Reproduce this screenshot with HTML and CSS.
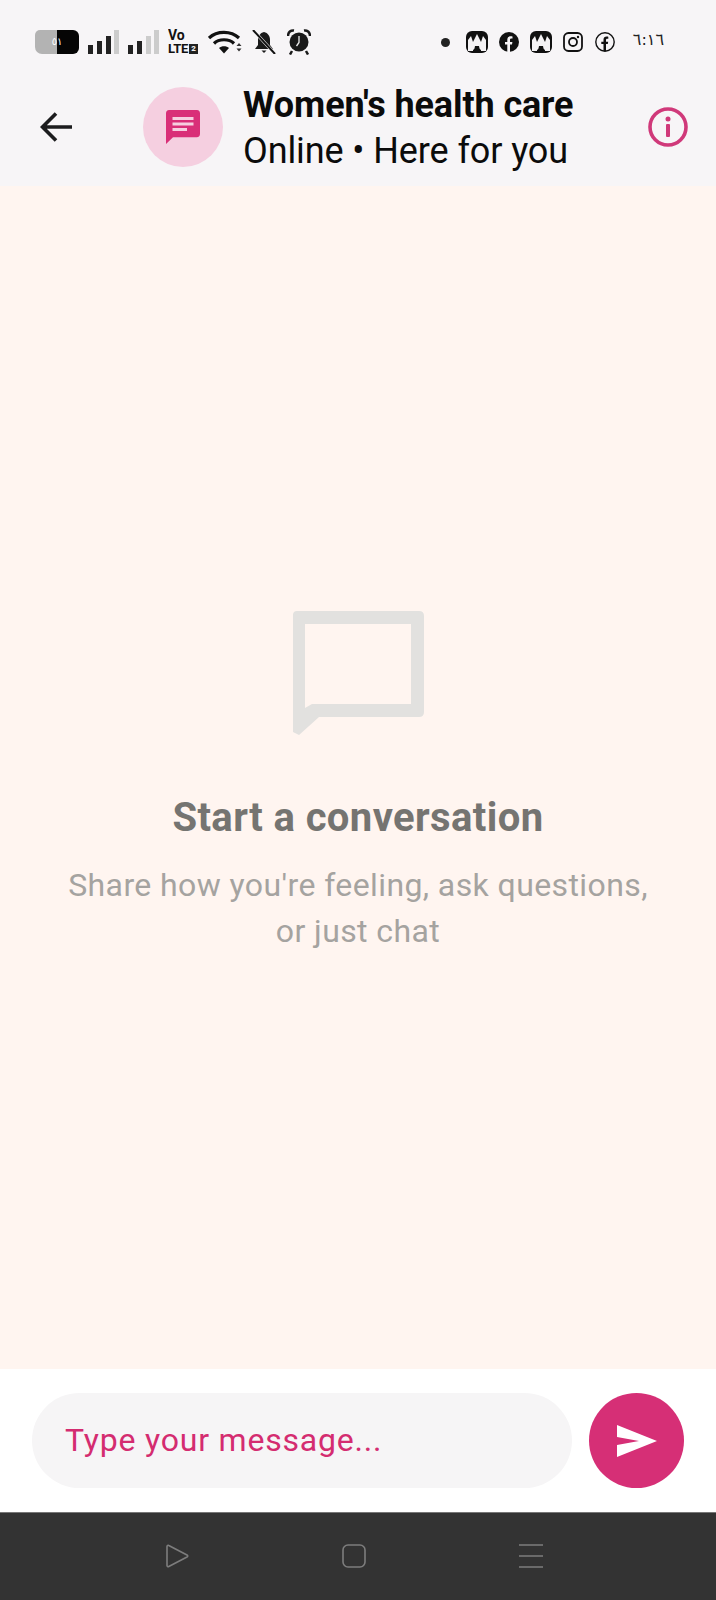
FILE: index.html
```html
<!DOCTYPE html>
<html lang="en">
<head>
<meta charset="utf-8">
<title>Women's health care</title>
<link rel="stylesheet" href="styles.css">
</head>
<body>
<div class="app">
  <div class="top">
    <div class="status">
      <div class="status-left">
        <div class="battery"><span class="battery-text">٥١</span></div>
        <svg class="sig" viewBox="0 0 31 24"><rect x="0" y="15" width="5" height="9" fill="#222"/><rect x="9" y="11" width="5" height="13" fill="#222"/><rect x="18" y="6" width="5" height="18" fill="#222"/><rect x="26" y="0" width="5" height="24" fill="#ccc"/></svg>
        <svg class="sig" viewBox="0 0 31 24"><rect x="0" y="15" width="5" height="9" fill="#222"/><rect x="9" y="11" width="5" height="13" fill="#222"/><rect x="18" y="6" width="5" height="18" fill="#ccc"/><rect x="26" y="0" width="5" height="24" fill="#ccc"/></svg>
        <div class="volte"><span class="vo">Vo</span><span class="lte">LTE<b class="two">2</b></span></div>
        <svg class="wifi" viewBox="0 0 35 24"><g fill="none" stroke="#111" stroke-width="3.200"><path d="M1 8 C9 0.500 23 0.500 31 8"/><path d="M6 13.500 C11 8.500 21 8.500 26 13.500"/></g><path d="M11 18 C13.500 15.500 18.500 15.500 21 18 L16 23.500Z" fill="#111"/><path d="M28.500 16 L31 13 L33.500 16ZM28.500 18.500 L33.500 18.500 L31 21.500Z" fill="#333"/></svg>
        <svg class="bell" viewBox="0 0 24 24"><path d="M12 2 C8 3 6 6 6 10 V15 L3 19 H21 L18 15 V10 C18 6 16 3 12 2Z" fill="#1a1a1a"/><path d="M9.500 20.500 H14.500 L12 23Z" fill="#1a1a1a"/><path d="M1 0 L23 24" stroke="#f7f5f7" stroke-width="3"/><path d="M1 0 L23 24" stroke="#111" stroke-width="2"/></svg>
        <svg class="alarm" viewBox="0 0 24 26"><circle cx="12" cy="13" r="9.500" fill="#1a1a1a"/><path d="M12 7 V13.500 L9.500 17" stroke="#eee" stroke-width="1.300" fill="none"/><path d="M1 7 C1 3 4 1 7 1.500M23 7 C23 3 20 1 17 1.500" stroke="#1a1a1a" stroke-width="2.500" fill="none"/><path d="M5 22 L3 25.500M19 22 L21 25.500" stroke="#1a1a1a" stroke-width="2.500"/></svg>
      </div>
      <div class="status-right">
        <span class="dot"></span>
        <svg class="app-ic" viewBox="0 0 24 24"><rect x="1" y="1" width="22" height="22" rx="6" fill="#111"/><path d="M3 21 V10 L6 6 L8 12 L12 4 L16 12 L18 6 L21 10 V21 H15 L14 16 H10 L9 21Z" fill="#f4f2f4"/><path d="M8 20 L12 17 L16 20 V23 H8Z" fill="#111"/></svg>
        <svg class="fb-ic" viewBox="0 0 20 20"><circle cx="10" cy="10" r="10" fill="#111"/><path d="M8.300 20 V12.500 H6 V10 H8.300 V7.800 C8.300 5.500 9.700 4.200 11.700 4.200 C12.700 4.200 13.500 4.400 13.500 4.400 V6.600 H12.400 C11.300 6.600 11 7.200 11 8 V10 H13.400 L13 12.500 H11 V20Z" fill="#f7f5f7"/></svg>
        <svg class="app-ic" viewBox="0 0 24 24"><rect x="1" y="1" width="22" height="22" rx="6" fill="#111"/><path d="M3 21 V10 L6 6 L8 12 L12 4 L16 12 L18 6 L21 10 V21 H15 L14 16 H10 L9 21Z" fill="#f4f2f4"/><path d="M8 20 L12 17 L16 20 V23 H8Z" fill="#111"/></svg>
        <svg class="ig-ic" viewBox="0 0 20 20"><rect x="1" y="1" width="18" height="18" rx="4.500" fill="none" stroke="#111" stroke-width="1.800"/><circle cx="10" cy="10" r="4" fill="none" stroke="#111" stroke-width="1.800"/><circle cx="15" cy="5" r="1.200" fill="#111"/></svg>
        <svg class="fb-ic2" viewBox="0 0 20 20"><circle cx="10" cy="10" r="9.200" fill="none" stroke="#111" stroke-width="1.400"/><path d="M8.500 19 V12 H6.300 V9.800 H8.500 V7.800 C8.500 5.700 9.800 4.600 11.600 4.600 C12.500 4.600 13.300 4.800 13.300 4.800 V6.800 H12.300 C11.300 6.800 11 7.400 11 8.100 V9.800 H13.200 L12.800 12 H11 V19Z" fill="#111"/></svg>
        <span class="time">٦:١٦</span>
      </div>
    </div>
    <header class="bar">
      <svg class="back" viewBox="0 0 32 30"><path d="M32 15 H3 M16 1.500 L2.500 15 L16 28.500" fill="none" stroke="#1c1c1e" stroke-width="3.600"/></svg>
      <div class="avatar">
        <svg class="avatar-ic" viewBox="0 0 34 34"><path d="M3.500 0 H30.500 A3.400 3.400 0 0 1 34 3.400 V23.800 A3.400 3.400 0 0 1 30.500 27.200 H7 L0 34 V3.400 A3.400 3.400 0 0 1 3.500 0Z" fill="#d92f78"/><path d="M6.500 7 H27.500 V10 H6.500Z M6.500 12.500 H27.500 V15.500 H6.500Z M6.500 18 H21 V21 H6.500Z" fill="#f6cfe0"/></svg>
      </div>
      <div class="who">
        <div class="name">Women's health care</div>
        <div class="state">Online • Here for you</div>
      </div>
      <svg class="info" viewBox="0 0 40 40"><circle cx="20" cy="20" r="18" fill="none" stroke="#d0397a" stroke-width="3.600"/><circle cx="20" cy="12" r="2.500" fill="#d0397a"/><rect x="18" y="17" width="4" height="13" rx="1" fill="#d0397a"/></svg>
    </header>
  </div>
  <main class="chat">
    <svg class="empty-ic" viewBox="0 0 133 125"><path fill-rule="evenodd" d="M5 1 H127 Q132 1 132 6 V102 Q132 107 127 107 H27 L7 125 L1 122 V5 Q1 1 5 1Z M13 14 V98 L20 94 H119 V14Z" fill="#e2e1df"/></svg>
    <h1 class="empty-title">Start a conversation</h1>
    <p class="empty-sub">Share how you're feeling, ask questions,<br>or just chat</p>
  </main>
  <div class="composer">
    <div class="field">Type your message...</div>
    <button class="send" type="button" aria-label="Send"><svg class="send-ic" viewBox="0 0 40 32"><path d="M0 0 L40 16 L0 32 V20 L22 16 L0 12Z" fill="#fff"/></svg></button>
  </div>
  <nav class="nav">
    <svg class="nav-ic" viewBox="0 0 24 24"><path d="M2 2.500 C2 1.500 3 1 3.800 1.500 L22 11 C23 11.600 23 12.400 22 13 L3.800 22.500 C3 23 2 22.500 2 21.500Z" fill="none" stroke="#7d7d7d" stroke-width="1.600"/></svg>
    <svg class="nav-ic" viewBox="0 0 24 24"><rect x="1" y="1" width="22" height="22" rx="5" fill="none" stroke="#7d7d7d" stroke-width="1.600"/></svg>
    <svg class="nav-ic" viewBox="0 0 24 24"><path d="M0 1 H24 M0 12 H24 M0 23 H24" stroke="#7d7d7d" stroke-width="1.600"/></svg>
  </nav>
</div>
</body>
</html>
```
FILE: styles.css
```css
* { box-sizing: border-box; }
html, body { margin: 0; padding: 0; }
body { font-family: Roboto, "Liberation Sans", sans-serif; background: #fff5f0; }
.app { width: 716px; height: 1600px; display: flex; flex-direction: column; overflow: hidden; }

.top { height: 186px; padding-top: 27px; background: #f7f5f7; flex: none; }
.status { display: flex; justify-content: space-between; align-items: center; height: 30px; padding: 0 52px 0 35px; }
.status-left, .status-right { display: flex; align-items: center; }

.battery { width: 44px; height: 24px; border-radius: 5px 6px 6px 7px; background: linear-gradient(90deg, #b3b3b3 0 50%, #050505 50% 100%); display: flex; align-items: center; justify-content: center; }
.battery-text { font-family: "DejaVu Sans", sans-serif; font-size: 10px; color: #fff; line-height: 1; }
.sig { width: 31px; height: 24px; margin-left: 9px; }
.volte { width: 33px; height: 28px; margin-left: 9px; display: flex; flex-direction: column; font-weight: 700; color: #111; }
.vo { font-size: 14px; line-height: 14px; height: 14px; overflow: hidden; }
.lte { font-size: 13px; line-height: 14px; height: 14px; letter-spacing: -0.3px; display: flex; }
.two { font-size: 8px; background: #222; color: #eee; width: 9px; height: 10px; line-height: 10px; text-align: center; margin: 2px 0 0 1px; letter-spacing: 0; }
.wifi { width: 35px; height: 24px; margin-left: 7px; }
.bell { width: 24px; height: 24px; margin-left: 9px; }
.alarm { width: 24px; height: 26px; margin-left: 11px; }

.dot { width: 9px; height: 9px; border-radius: 50%; background: #222; margin-right: 15px; }
.app-ic { width: 24px; height: 24px; }
.fb-ic, .ig-ic, .fb-ic2 { width: 20px; height: 20px; margin: 0 10px; }
.ig-ic { margin-left: 10px; margin-right: 12px; }
.fb-ic2 { margin: 0; }
.time { font-family: "DejaVu Sans", sans-serif; font-size: 16px; color: #222; margin: 0 0 5px 18px; }

.bar { display: flex; align-items: center; height: 80px; margin-top: 30px; padding: 0 28px 0 40px; }
.back { width: 32px; height: 30px; flex: none; }
.avatar { width: 80px; height: 80px; border-radius: 50%; background: #f5cfe0; margin-left: 71px; display: flex; align-items: center; justify-content: center; flex: none; }
.avatar-ic { width: 34px; height: 34px; }
.who { margin: 2px 0 0 20px; flex: 1; color: #0b0b0b; letter-spacing: -0.1px; }
.name { font-size: 36px; font-weight: 700; line-height: 45px; }
.state { font-size: 36px; line-height: 46px; }
.info { width: 40px; height: 40px; flex: none; }

.chat { flex: 1; display: flex; flex-direction: column; align-items: center; padding-top: 424px; background: #fff5f0; }
.empty-ic { width: 133px; height: 125px; }
.empty-title { margin: 56px 0 0; font-size: 40px; line-height: 54px; font-weight: 700; color: #757471; letter-spacing: 0.4px; }
.empty-sub { margin: 17px 0 0; font-size: 32px; line-height: 46px; color: #a5a3a0; text-align: center; letter-spacing: 0.4px; }

.composer { height: 143px; background: #fff; display: flex; align-items: center; gap: 17px; padding: 0 32px; flex: none; }
.field { flex: 1; height: 95px; border-radius: 48px; background: #f6f5f6; display: flex; align-items: center; padding: 0 0 2px 33px; font-size: 32px; color: #d42c70; letter-spacing: 0.8px; }
.send { width: 95px; height: 95px; border: 0; padding: 0; border-radius: 50%; background: #d62f76; display: flex; align-items: center; justify-content: center; flex: none; }
.send-ic { width: 40px; height: 32px; }

.nav { height: 88px; background: #333; border-top: 1px solid #777; display: flex; align-items: center; justify-content: center; gap: 153px; flex: none; padding: 0 8px 2px 0; }
.nav-ic { width: 24px; height: 24px; }
```
